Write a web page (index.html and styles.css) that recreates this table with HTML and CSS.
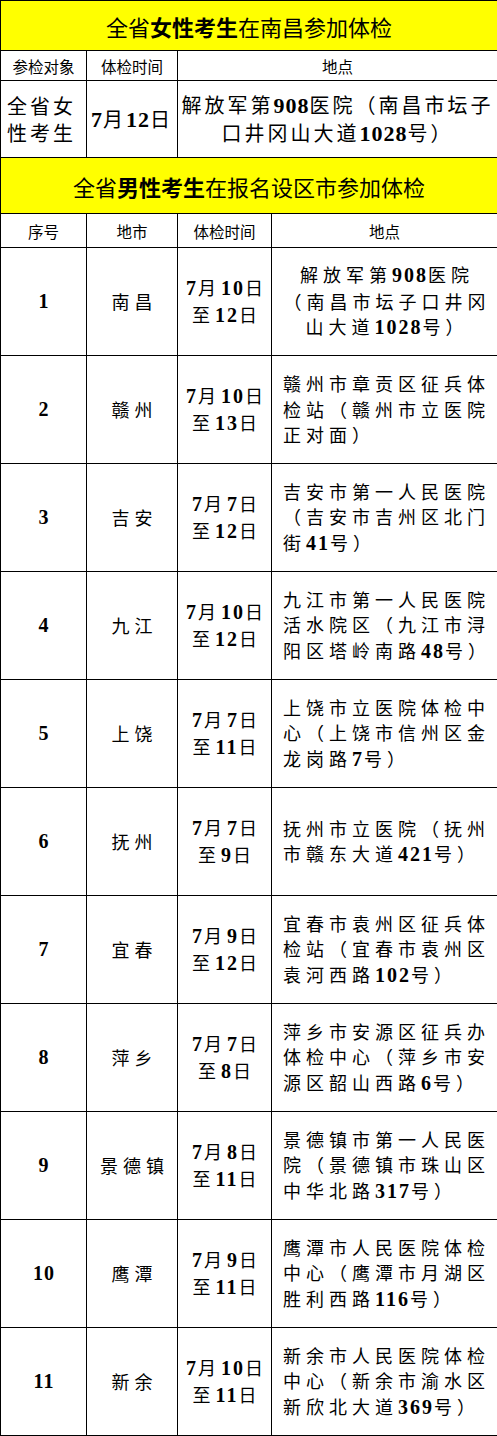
FILE: index.html
```html
<!DOCTYPE html>
<html lang="zh-CN">
<head>
<meta charset="utf-8">
<title>体检安排</title>
<link rel="stylesheet" href="styles.css">
</head>
<body>
<table class="sheet">
  <colgroup>
    <col class="c1"><col class="c2"><col class="c3"><col class="c4">
  </colgroup>
  <tbody>
    <tr class="title t1"><td colspan="4">全省<b>女性考生</b>在南昌参加体检</td></tr>
    <tr class="head h1"><td>参检对象</td><td>体检时间</td><td colspan="2">地点</td></tr>
    <tr class="top-row">
      <td class="who">全省女<br>性考生</td>
      <td class="tdate"><span class="n">7</span>月<span class="n">12</span>日</td>
      <td colspan="2" class="taddr">解放军第<span class="n">908</span>医院（南昌市坛子<br>口井冈山大道<span class="n">1028</span>号）</td>
    </tr>
    <tr class="title t2"><td colspan="4">全省<b>男性考生</b>在报名设区市参加体检</td></tr>
    <tr class="head h2"><td>序号</td><td>地市</td><td>体检时间</td><td>地点</td></tr>

    <tr class="row">
      <td class="num">1</td><td class="city">南昌</td>
      <td class="date"><span class="n">7</span>月<span class="n">10</span>日<br>至<span class="n">12</span>日</td>
      <td class="addr center">解放军第<span class="n">908</span>医院<br>（南昌市坛子口井冈<br>山大道<span class="n">1028</span>号）</td>
    </tr>
    <tr class="row">
      <td class="num">2</td><td class="city">赣州</td>
      <td class="date"><span class="n">7</span>月<span class="n">10</span>日<br>至<span class="n">13</span>日</td>
      <td class="addr">赣州市章贡区征兵体<br>检站（赣州市立医院<br>正对面）</td>
    </tr>
    <tr class="row">
      <td class="num">3</td><td class="city">吉安</td>
      <td class="date"><span class="n">7</span>月<span class="n">7</span>日<br>至<span class="n">12</span>日</td>
      <td class="addr">吉安市第一人民医院<br>（吉安市吉州区北门<br>街<span class="n">41</span>号）</td>
    </tr>
    <tr class="row">
      <td class="num">4</td><td class="city">九江</td>
      <td class="date"><span class="n">7</span>月<span class="n">10</span>日<br>至<span class="n">12</span>日</td>
      <td class="addr">九江市第一人民医院<br>活水院区（九江市浔<br>阳区塔岭南路<span class="n">48</span>号）</td>
    </tr>
    <tr class="row">
      <td class="num">5</td><td class="city">上饶</td>
      <td class="date"><span class="n">7</span>月<span class="n">7</span>日<br>至<span class="n">11</span>日</td>
      <td class="addr">上饶市立医院体检中<br>心（上饶市信州区金<br>龙岗路<span class="n">7</span>号）</td>
    </tr>
    <tr class="row">
      <td class="num">6</td><td class="city">抚州</td>
      <td class="date"><span class="n">7</span>月<span class="n">7</span>日<br>至<span class="n">9</span>日</td>
      <td class="addr">抚州市立医院（抚州<br>市赣东大道<span class="n">421</span>号）</td>
    </tr>
    <tr class="row">
      <td class="num">7</td><td class="city">宜春</td>
      <td class="date"><span class="n">7</span>月<span class="n">9</span>日<br>至<span class="n">12</span>日</td>
      <td class="addr">宜春市袁州区征兵体<br>检站（宜春市袁州区<br>袁河西路<span class="n">102</span>号）</td>
    </tr>
    <tr class="row">
      <td class="num">8</td><td class="city">萍乡</td>
      <td class="date"><span class="n">7</span>月<span class="n">7</span>日<br>至<span class="n">8</span>日</td>
      <td class="addr">萍乡市安源区征兵办<br>体检中心（萍乡市安<br>源区韶山西路<span class="n">6</span>号）</td>
    </tr>
    <tr class="row">
      <td class="num">9</td><td class="city">景德镇</td>
      <td class="date"><span class="n">7</span>月<span class="n">8</span>日<br>至<span class="n">11</span>日</td>
      <td class="addr">景德镇市第一人民医<br>院（景德镇市珠山区<br>中华北路<span class="n">317</span>号）</td>
    </tr>
    <tr class="row">
      <td class="num">10</td><td class="city">鹰潭</td>
      <td class="date"><span class="n">7</span>月<span class="n">9</span>日<br>至<span class="n">11</span>日</td>
      <td class="addr">鹰潭市人民医院体检<br>中心（鹰潭市月湖区<br>胜利西路<span class="n">116</span>号）</td>
    </tr>
    <tr class="row">
      <td class="num">11</td><td class="city">新余</td>
      <td class="date"><span class="n">7</span>月<span class="n">10</span>日<br>至<span class="n">11</span>日</td>
      <td class="addr">新余市人民医院体检<br>中心（新余市渝水区<br>新欣北大道<span class="n">369</span>号）</td>
    </tr>
  </tbody>
</table>
</body>
</html>
```

FILE: styles.css
```css
html, body {
  margin: 0;
  padding: 0;
  background: #ffffff;
}

.sheet {
  border-collapse: collapse;
  table-layout: fixed;
  width: 497px;
  font-family: "Noto Sans CJK SC", "Noto Sans", sans-serif;
  color: #000000;
}

.c1 { width: 86px; }
.c2 { width: 91px; }
.c3 { width: 94px; }
.c4 { width: 226px; }

.sheet td {
  border: 1px solid #000000;
  padding: 0;
  text-align: center;
  vertical-align: middle;
  white-space: nowrap;
}

.n {
  font-family: "Liberation Serif", serif;
  font-weight: bold;
  font-size: 20px;
  letter-spacing: 2px;
}

/* yellow section titles */
.title td {
  background: #ffff00;
  font-size: 22px;
  font-weight: 400;
  line-height: 26px;
}
.title b {
  font-weight: 700;
}
.t1 td { height: 49px; }
.t2 td { height: 55px; }

/* column header rows */
.head td {
  font-size: 15.5px;
  line-height: 20px;
}
.h1 td { height: 29px; }
.h2 td { height: 33px; }

/* first table data row */
.top-row td {
  height: 76px;
  font-size: 20px;
  line-height: 27px;
  letter-spacing: 3px;
}
.top-row .who {
  text-align: left;
  padding-left: 6px;
}
.top-row .n {
  font-size: 22px;
  letter-spacing: 1px;
}

/* second table rows */
.row td {
  height: 107px;
  font-size: 18px;
  line-height: 25.5px;
  letter-spacing: 5px;
}
.row .num {
  font-family: "Liberation Serif", serif;
  font-weight: bold;
  font-size: 20px;
  letter-spacing: 1px;
  padding-left: 1px;
}
.row .city,
.row .date {
  padding-left: 5px;
}
.row .addr {
  text-align: left;
  padding-left: 11px;
}
.row .addr.center {
  text-align: center;
  padding-left: 5px;
}
```
